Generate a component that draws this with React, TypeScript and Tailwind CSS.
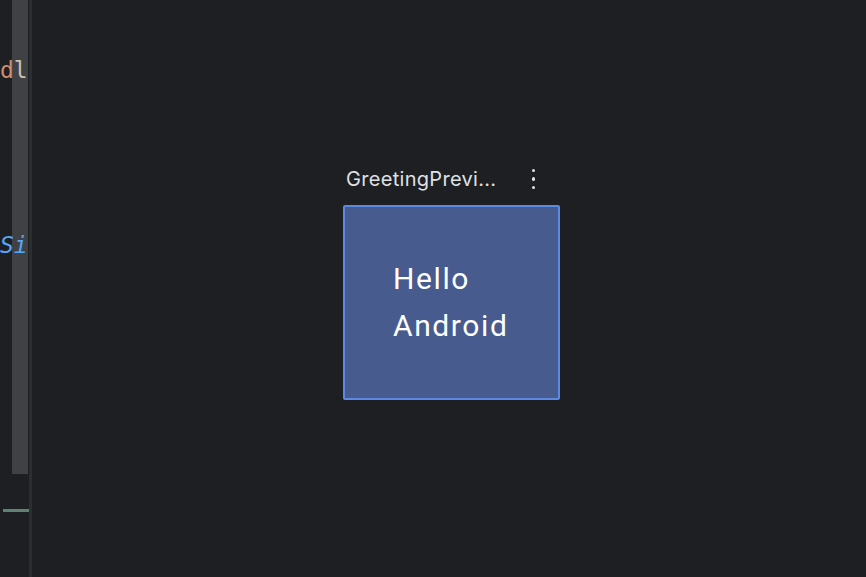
import React from 'react'

function EditorStrip() {
  return (
    <div className="relative h-full w-[29px] shrink-0 overflow-hidden bg-[#1e1f22]">
      <div className="absolute left-[12px] top-0 h-[474px] w-[16px] bg-[#404144]" />
      <div
        className="absolute left-0 top-[56px] text-[23px] leading-[28px] text-[#c9c0b4]"
        style={{ fontFamily: '"DejaVu Sans Mono", monospace' }}
      >
        <span className="text-[#cf8e6d]">d</span>l
      </div>
      <div
        className="absolute left-0 top-[231px] text-[23px] italic leading-[28px] text-[#56a8f5]"
        style={{ fontFamily: '"DejaVu Sans Mono", monospace' }}
      >
        Si
      </div>
      <div className="absolute left-[3px] top-[509px] h-[3px] w-[26px] bg-[#5f8372]" />
    </div>
  )
}

export default function App() {
  return (
    <div className="flex h-[577px] w-[866px] overflow-hidden bg-[#1e1f22]">
      <EditorStrip />
      <div className="h-full w-[3px] shrink-0 bg-[#2b2d30]" />
      <main className="flex-1 pl-[311px] pt-[164px]">
        <div className="flex w-[217px] items-center justify-between pr-[25px]">
          <span
            className="pl-[3px] text-[20px] leading-[30px] tracking-[0.3px] text-[#dfe1e5]"
            style={{ fontFamily: 'Inter, sans-serif' }}
          >
            GreetingPrevi...
          </span>
          <div className="flex flex-col items-center gap-[5px]">
            <span className="h-[3.5px] w-[3.5px] rounded-full bg-[#dfe1e5]" />
            <span className="h-[3.5px] w-[3.5px] rounded-full bg-[#dfe1e5]" />
            <span className="h-[3.5px] w-[3.5px] rounded-full bg-[#dfe1e5]" />
          </div>
        </div>
        <div className="mt-[11px] h-[195px] w-[217px] rounded-[2px] border-2 border-[#5a8ae6] bg-[#475b8f] pl-[48px] pt-[48px]">
          <p
            className="text-[30px] leading-[47px] tracking-[1.6px] text-white"
            style={{ fontFamily: '"Roboto", sans-serif' }}
          >
            Hello
            <br />
            Android
          </p>
        </div>
      </main>
    </div>
  )
}
